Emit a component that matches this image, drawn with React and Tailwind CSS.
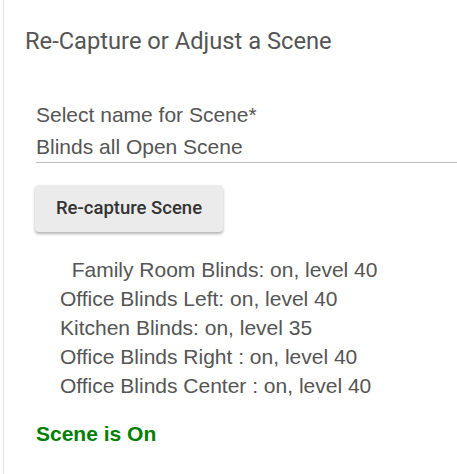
export default function App() {
  const lines = [
    "\u00a0\u00a0Family Room Blinds: on, level 40",
    "Office Blinds Left: on, level 40",
    "Kitchen Blinds: on, level 35",
    "Office Blinds Right : on, level 40",
    "Office Blinds Center : on, level 40",
  ];
  return (
    <div className="w-[457px] h-[474px] bg-white overflow-hidden">
      <div className="ml-[3px] h-full border-l border-[#e6e6e6] pl-[21px] pt-[27px]">
        <h2 className="text-[23.7px] leading-[28px] text-[#555] font-['Roboto',sans-serif]">
          Re-Capture or Adjust a Scene
        </h2>
        <div className="mt-[48px] pl-[11px]">
          <div className="text-[21px] leading-[24px] text-[#555] font-['Liberation_Sans',Arial,sans-serif]">Select name for Scene*</div>
          <div className="mt-[8px] text-[21px] leading-[24px] text-[#555] pb-[3px] border-b border-[#bdbdbd] font-['Liberation_Sans',Arial,sans-serif]">
            Blinds all Open Scene
          </div>
          <button className="mt-[22px] -ml-[1px] w-[188px] h-[47px] rounded-[4px] bg-[#ebebeb] text-[18.5px] font-medium text-[#333] shadow-[0_2px_3px_rgba(0,0,0,0.3)] font-['Roboto',sans-serif]">
            Re-capture Scene
          </button>
        </div>
        <div className="mt-[23px] pl-[35px] font-['Liberation_Sans',Arial,sans-serif] text-[21px] leading-[29px] text-[#555]">
          {lines.map((l) => (
            <div key={l}>{l}</div>
          ))}
        </div>
        <div className="mt-[22px] pl-[11px] font-['Liberation_Sans',Arial,sans-serif] text-[21px] leading-[24px] font-bold text-[#008000]">
          Scene is On
        </div>
      </div>
    </div>
  );
}
